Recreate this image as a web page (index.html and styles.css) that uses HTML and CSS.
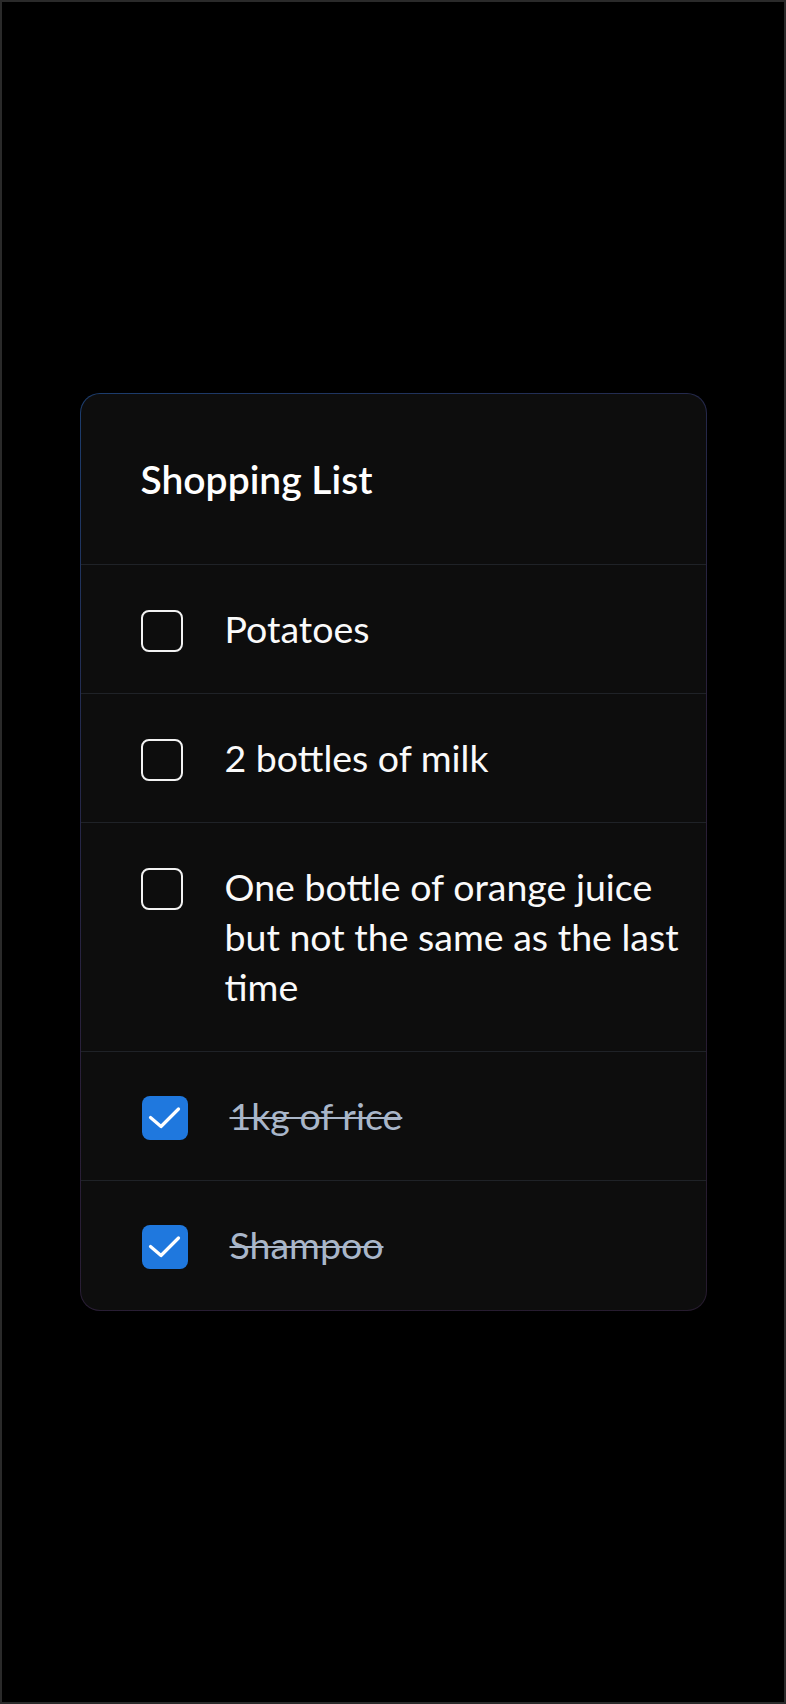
FILE: index.html
```html
<!DOCTYPE html>
<html lang="en">
<head>
<meta charset="utf-8">
<title>Shopping List</title>
<link rel="stylesheet" href="styles.css">
</head>
<body>
<div class="screen">
  <section class="card">
    <header class="card-header">
      <h1 class="title">Shopping List</h1>
    </header>
    <ul class="list">
      <li class="item">
        <span class="box"></span>
        <span class="label">Potatoes</span>
      </li>
      <li class="item">
        <span class="box"></span>
        <span class="label">2 bottles of milk</span>
      </li>
      <li class="item">
        <span class="box"></span>
        <span class="label">One bottle of orange juice but not the same as the last time</span>
      </li>
      <li class="item done">
        <span class="box checked"><svg viewBox="0 0 46 44" width="46" height="44"><polyline points="8.5,21.5 19,30.5 36.5,13" fill="none" stroke="#fff" stroke-width="3.2" stroke-linecap="round" stroke-linejoin="round"/></svg></span>
        <span class="label">1kg of rice</span>
      </li>
      <li class="item done">
        <span class="box checked"><svg viewBox="0 0 46 44" width="46" height="44"><polyline points="8.5,21.5 19,30.5 36.5,13" fill="none" stroke="#fff" stroke-width="3.2" stroke-linecap="round" stroke-linejoin="round"/></svg></span>
        <span class="label">Shampoo</span>
      </li>
    </ul>
  </section>
</div>
</body>
</html>
```

FILE: styles.css
```css
html, body {
  margin: 0;
  padding: 0;
  background: #000;
}

.screen {
  box-sizing: border-box;
  width: 786px;
  height: 1704px;
  border: 2px solid #2a2a2a;
  background: #000;
  display: flex;
  align-items: center;
  justify-content: center;
  font-family: Lato, "Noto Sans", sans-serif;
}

.card {
  box-sizing: border-box;
  width: 627px;
  border: 1px solid transparent;
  border-radius: 20px;
  background:
    linear-gradient(#0d0d0d, #0d0d0d) padding-box,
    linear-gradient(150deg, #1c3d6e 0%, #25284a 30%, #2a1f38 55%, #261b2e 100%) border-box;
  overflow: hidden;
}

.card-header {
  padding: 60px 60px;
  border-bottom: 1px solid #1f2227;
}

.title {
  margin: 0;
  font-size: 39px;
  line-height: 50px;
  font-weight: 600;
  color: #fff;
}

.list {
  list-style: none;
  margin: 0;
  padding: 0;
}

.item {
  display: flex;
  align-items: flex-start;
  gap: 42px;
  padding: 39px 20px 39px 60px;
  border-bottom: 1px solid #1f2227;
}

.item:last-child {
  border-bottom: none;
  padding-bottom: 40px;
}

.box {
  flex: none;
  box-sizing: border-box;
  width: 42px;
  height: 42px;
  margin-top: 6px;
  border: 2px solid #f2f2f2;
  border-radius: 8px;
}

.box.checked {
  width: 46px;
  height: 44px;
  margin-top: 5px;
  margin-left: 1px;
  border: none;
  background: #1f78de;
  display: flex;
}

.label {
  font-size: 37.5px;
  line-height: 50px;
  color: #fafafa;
}

.done .label {
  color: #a9b6c9;
  text-decoration: line-through;
  text-decoration-thickness: 2px;
}
```
